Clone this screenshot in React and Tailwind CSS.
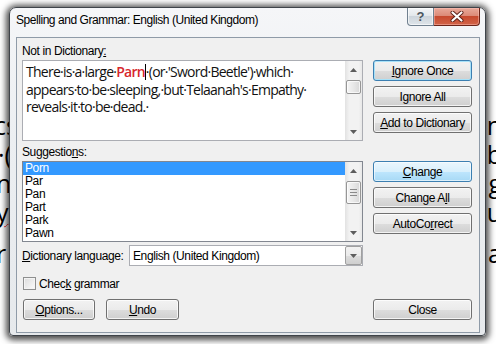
import React from 'react';

const btnBase =
  "flex items-center justify-center h-[21px] rounded-[3px] border text-[12px] leading-none text-black whitespace-nowrap";
const btnStyles = {
  normal:
    "border-[#707070] bg-[linear-gradient(#f2f2f2_0%,#ebebeb_50%,#dddddd_51%,#cfcfcf_100%)] shadow-[inset_0_0_0_1px_rgba(255,255,255,0.75)]",
  focus:
    "border-[#3c7fb1] bg-[linear-gradient(#f2f2f2_0%,#ebebeb_50%,#dddddd_51%,#cfcfcf_100%)] shadow-[inset_0_0_0_1px_#a7e1f8]",
  hot:
    "border-[#3c7fb1] bg-[linear-gradient(#eaf6fd_0%,#d9f0fc_50%,#bee6fd_51%,#a7d9f5_100%)] shadow-[inset_0_0_0_1px_rgba(255,255,255,0.6)]",
};

function Btn({ children, variant = 'normal', className = '' }) {
  return <div className={`${btnBase} ${btnStyles[variant]} ${className}`}>{children}</div>;
}

function Arrow({ down }) {
  return (
    <svg width="7" height="4" viewBox="0 0 7 4">
      <polygon points={down ? '0,0 7,0 3.5,4' : '0,4 3.5,0 7,4'} fill="#5d5d5d" />
    </svg>
  );
}

function ScrollBar({ thumbH, grip }) {
  return (
    <div className="w-[17px] h-full flex flex-col bg-[linear-gradient(90deg,#e2e2e2,#f2f2f2_25%,#f2f2f2_80%,#e8e8e8)]">
      <div className="h-[17px] flex items-center justify-center">
        <Arrow />
      </div>
      <div className="flex-1">
        <div
          className={`mt-[2px] mx-[1px] rounded-[2px] border border-[#969696] bg-[linear-gradient(90deg,#f5f5f5,#e8e8e8_50%,#d8d8d8)] shadow-[inset_0_0_0_1px_rgba(255,255,255,0.7)] flex flex-col items-center justify-center gap-[2px] ${thumbH}`}
        >
          {grip && (
            <>
              <div className="w-[7px] h-[1px] bg-[#8a8a8a]" />
              <div className="w-[7px] h-[1px] bg-[#8a8a8a]" />
              <div className="w-[7px] h-[1px] bg-[#8a8a8a]" />
            </>
          )}
        </div>
      </div>
      <div className="h-[17px] flex items-center justify-center">
        <Arrow down />
      </div>
    </div>
  );
}

const suggestions = ['Porn', 'Par', 'Pan', 'Part', 'Park', 'Pawn'];

// visible edges of the document lines behind the dialog
const docLines = [
  { l: 'cs', r: 'n', lm: '-ml-[6px]' },
  { l: '·(', r: 'b', lm: '-ml-[2px]' },
  { l: 'n·', r: 'g', lm: '-ml-[4px]' },
  { l: 'y', r: 'u', lm: '-ml-[4px]', squiggle: true },
  { l: 'r', r: 'a', lm: '-ml-[4px]', gap: true },
];

export default function App() {
  return (
    <div className="relative w-[496px] h-[344px] overflow-hidden bg-white font-['Liberation_Sans',Arial,sans-serif]">
      {/* Word document behind the dialog */}
      <div className="pt-[111px] text-[25px] leading-[29px] text-black font-['Open_Sans',sans-serif]">
        {docLines.map((d) => (
          <div key={d.l} className={d.gap ? 'flex justify-between mt-[12px]' : 'flex justify-between'}>
            <span
              className={
                d.squiggle
                  ? `${d.lm} underline decoration-wavy decoration-red-500 decoration-1`
                  : d.lm
              }
            >
              {d.l}
            </span>
            <span className="-mr-[6px]">{d.r}</span>
          </div>
        ))}
      </div>

      {/* Dialog window */}
      <div className="absolute left-[9px] top-[7px] w-[477px] h-[329px] rounded-t-[7px] rounded-b-[4px] border border-[#3f444a] bg-[linear-gradient(#f5f6f8,#eceff2_40%,#e6e9ec)] shadow-[0_1px_6px_3px_rgba(0,0,0,0.7)] flex flex-col pb-[2px] pl-[6px] pr-[5px]">
        {/* Title bar */}
        <div className="h-[29px] flex items-start">
          <div className="flex-1 pt-[5px] text-[12px] leading-[15px] tracking-[-0.45px] text-black">
            Spelling and Grammar: English (United Kingdom)
          </div>
          <div className="flex">
            <div className="w-[27px] h-[18px] rounded-bl-[4px] border border-t-0 border-[#70808f] bg-[linear-gradient(#f3f5f7,#e3e8ec_45%,#cdd5dc_50%,#dfe5ea)] shadow-[inset_0_0_0_1px_rgba(255,255,255,0.6)] flex items-center justify-center text-[13px] leading-none text-[#4c5661] font-bold">
              ?
            </div>
            <div className="w-[46px] h-[18px] rounded-br-[4px] border border-t-0 border-l-0 border-[#6b2419] bg-[linear-gradient(#e9a99a,#dc8b78_45%,#c74a2f_50%,#d26448)] shadow-[inset_0_0_0_1px_rgba(255,200,190,0.45)] flex items-center justify-center">
              <svg width="14" height="11" viewBox="0 0 14 11">
                <path d="M2.5 1.5 L11.5 9.5 M11.5 1.5 L2.5 9.5" stroke="#5a1f16" strokeWidth="4" strokeLinecap="round" />
                <path d="M2.5 1.5 L11.5 9.5 M11.5 1.5 L2.5 9.5" stroke="#ffffff" strokeWidth="2.2" strokeLinecap="round" />
              </svg>
            </div>
          </div>
        </div>

        {/* Client area */}
        <div className="flex-1 border border-[#8f9ba8] bg-[#f0f0f0] pt-[6px] pl-[5px] pr-[7px] text-[12px] tracking-[-0.4px] text-black">
          {/* Not in dictionary */}
          <div className="flex gap-[10px]">
            <div className="w-[341px]">
              <div className="h-[15px] leading-[15px]">
                Not in Dictionary<u>:</u>
              </div>
              <div className="mt-[1px] h-[81px] border border-[#abadb3] bg-white flex">
                <div className="flex-1 pl-[3px] pt-[2px] text-[14px] leading-[17.5px] font-['Open_Sans',sans-serif] tracking-[-0.75px] text-[#111] whitespace-nowrap">
                  <div>
                    There·is·a·large·<span className="text-[#d7262c] font-semibold">Parn</span>
                    <span className="inline-block w-[1px] h-[16px] bg-black align-[-3px]" />
                    ·(or·'Sword·Beetle')·which·
                  </div>
                  <div>appears·to·be·sleeping,·but·Telaanah's·Empathy·</div>
                  <div>reveals·it·to·be·dead.·</div>
                </div>
                <ScrollBar thumbH="h-[14px]" />
              </div>
            </div>
            <div className="w-[99px] mt-[16px] flex flex-col gap-[5px]">
              <Btn variant="focus"><u>I</u>gnore Once</Btn>
              <Btn>I<u>g</u>nore All</Btn>
              <Btn><u>A</u>dd to Dictionary</Btn>
            </div>
          </div>

          {/* Suggestions */}
          <div className="mt-[4px] flex gap-[10px]">
            <div className="w-[341px]">
              <div className="h-[15px] leading-[15px]">
                Suggestio<u>n</u>s:
              </div>
              <div className="mt-[1px] h-[81px] border border-[#828790] bg-white flex">
                <div className="flex-1">
                  {suggestions.map((s, i) => (
                    <div
                      key={s}
                      className={
                        i === 0
                          ? 'h-[13px] leading-[13px] pl-[2px] bg-[#3399ff] text-white'
                          : 'h-[13px] leading-[13px] pl-[2px]'
                      }
                    >
                      {s}
                    </div>
                  ))}
                </div>
                <ScrollBar thumbH="h-[23px]" grip />
              </div>
            </div>
            <div className="w-[99px] mt-[16px] flex flex-col gap-[5px]">
              <Btn variant="hot"><u>C</u>hange</Btn>
              <Btn>Change A<u>l</u>l</Btn>
              <Btn>AutoCo<u>r</u>rect</Btn>
            </div>
          </div>

          {/* Dictionary language */}
          <div className="mt-[3px] flex items-center h-[21px]">
            <div className="w-[107px] whitespace-nowrap">
              <u>D</u>ictionary language:
            </div>
            <div className="w-[234px] h-[21px] border border-[#abadb3] bg-white flex items-center">
              <div className="flex-1 pl-[3px] whitespace-nowrap">English (United Kingdom)</div>
              <div className="w-[17px] h-[19px] border border-[#a0a0a0] rounded-[2px] bg-[linear-gradient(#f2f2f2,#ebebeb_50%,#dddddd_51%,#cfcfcf)] flex items-center justify-center">
                <Arrow down />
              </div>
            </div>
          </div>

          {/* Check grammar */}
          <div className="mt-[10px] h-[15px] flex items-center pl-[1px]">
            <div className="w-[13px] h-[13px] border border-[#8e8f8f] bg-[linear-gradient(135deg,#dcdcdc,#fbfbfb)] shadow-[inset_0_0_0_1px_#f4f4f4]" />
            <div className="ml-[3px]">
              Chec<u>k</u> grammar
            </div>
          </div>

          {/* Bottom buttons */}
          <div className="mt-[8px] flex">
            <Btn className="w-[72px] ml-[1px]"><u>O</u>ptions...</Btn>
            <Btn className="w-[73px] ml-[11px]"><u>U</u>ndo</Btn>
            <div className="flex-1" />
            <Btn className="w-[99px]">Close</Btn>
          </div>
        </div>
      </div>
    </div>
  );
}
